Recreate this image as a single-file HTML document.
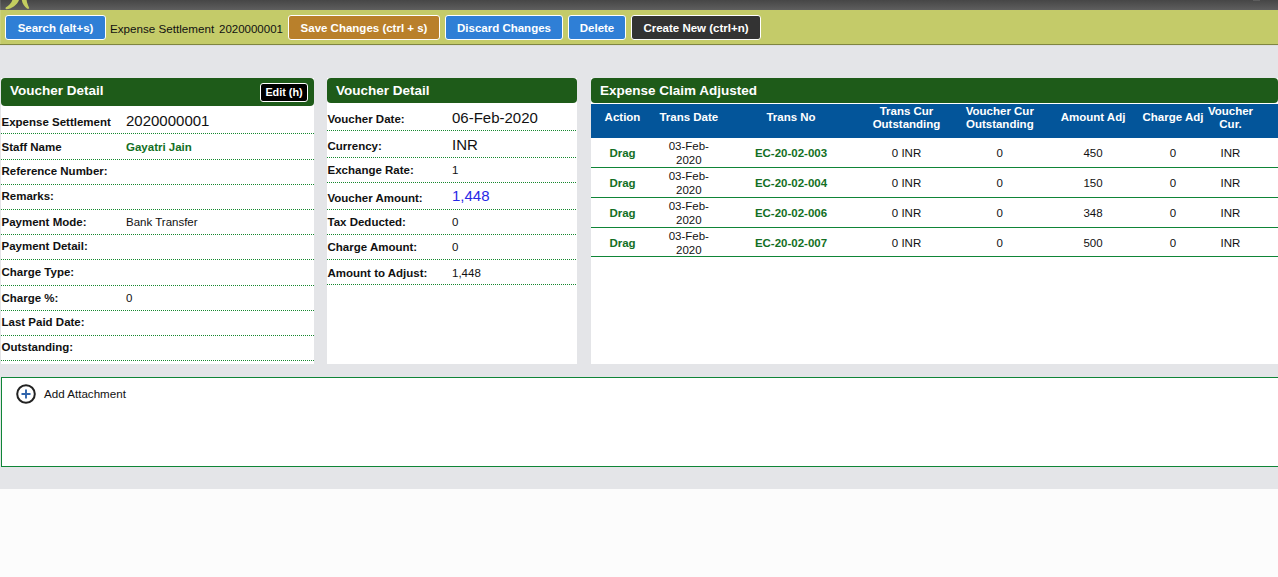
<!DOCTYPE html>
<html><head><meta charset="utf-8">
<style>
*{box-sizing:border-box;margin:0;padding:0}
html,body{width:1278px;height:577px;overflow:hidden;background:#fcfcfc;font-family:"Liberation Sans",sans-serif;color:#111}
.a{position:absolute;white-space:nowrap}
#top{position:absolute;left:0;top:0;width:1278px;height:10px;background:linear-gradient(#464646,#5e5e5e)}
#bar{position:absolute;left:0;top:10px;width:1278px;height:35px;background:#c4cb69;border-bottom:1px solid #7f8540}
#gray{position:absolute;left:0;top:45px;width:1278px;height:444px;background:#e4e5e8;border-top:1px solid #dcdde0}
.btn{position:absolute;top:15px;height:25px;border:1px solid #fff;border-radius:3px;color:#fff;font-weight:bold;font-size:11.5px;line-height:24px;text-align:center;white-space:nowrap}
.blue{background:#2f7fd6}
.panel{position:absolute;top:78px;background:#fff}
.hdr{position:absolute;left:0;top:0;background:#1e5b19;border-radius:4px;color:#fff;font-weight:bold;font-size:13.5px}
.dl{position:absolute;left:0;height:1px;background-image:linear-gradient(to right,#15882e 50%,transparent 50%);background-size:2px 1px}
.lbl{position:absolute;left:1.5px;font-weight:bold;font-size:11.5px;white-space:nowrap}
.val{position:absolute;font-size:11.5px;white-space:nowrap}
.big{font-size:15px}
.th{position:absolute;color:#fff;font-weight:bold;font-size:11.5px;line-height:12.5px;text-align:center;width:120px;white-space:nowrap}
.td{position:absolute;font-size:11.5px;line-height:13px;text-align:center;width:120px;white-space:nowrap}
.g{color:#136f24;font-weight:bold}
.rl{position:absolute;left:591px;width:687px;height:1px;background:#0f8537}
</style></head><body>
<div id="top"></div>
<svg style="position:absolute;left:0;top:0" width="40" height="10">
<path d="M6.5 9.2 C11 9, 17.5 5, 19 0 L12.4 0 C11.5 3, 8.5 5.8, 6 7.2 C5.2 7.8, 5.4 9.2, 6.5 9.2 Z" fill="#c3ce5f"/>
<path d="M21.8 0 L26.6 0 C26.8 3, 28.6 6, 29.2 8.2 C29 8.9, 27.6 9, 27 8.5 C24.8 6.5, 22.2 4, 21.8 0 Z" fill="#c3ce5f"/>
</svg>
<div style="position:absolute;left:1253px;top:0;width:7px;height:1px;background:#5d5d5d"></div>
<div id="bar"></div>
<div id="gray"></div>
<div style="position:absolute;left:0;top:0;width:1px;height:44px;background:rgba(255,255,255,0.12)"></div>
<div class="btn blue" style="left:5px;width:101px">Search (alt+s)</div>
<div class="a" style="left:110px;top:16.4px;line-height:25px;font-size:11.65px">Expense Settlement</div>
<div class="a" style="left:219px;top:17px;line-height:25px;font-size:11.5px">2020000001</div>
<div class="btn" style="left:288px;width:152px;background:#b9802b">Save Changes (ctrl + s)</div>
<div class="btn blue" style="left:445px;width:118px">Discard Changes</div>
<div class="btn blue" style="left:568px;width:58px">Delete</div>
<div class="btn" style="left:631px;width:130px;background:#333">Create New (ctrl+n)</div>

<!-- panel 1 -->
<div class="panel" style="left:1px;width:313px;height:286px">
  <div class="hdr" style="width:313px;height:28px"><span class="a" style="left:9px;top:4.5px">Voucher Detail</span>
    <div style="position:absolute;left:259px;top:5px;width:48px;height:19px;background:#000;border:1px solid #fff;border-radius:3px;font-size:10.8px;line-height:17px;text-align:center">Edit (h)</div>
  </div>
</div>
<div class="dl" style="left:1px;top:133px;width:313px"></div>
<div class="dl" style="left:1px;top:159px;width:313px"></div>
<div class="dl" style="left:1px;top:184px;width:313px"></div>
<div class="dl" style="left:1px;top:209px;width:313px"></div>
<div class="dl" style="left:1px;top:234px;width:313px"></div>
<div class="dl" style="left:1px;top:259px;width:313px"></div>
<div class="dl" style="left:1px;top:285px;width:313px"></div>
<div class="dl" style="left:1px;top:310px;width:313px"></div>
<div class="dl" style="left:1px;top:335px;width:313px"></div>
<div class="dl" style="left:1px;top:360px;width:313px"></div>

<div class="lbl" style="top:116px">Expense Settlement</div>
<div class="val big" style="left:126px;top:112px">2020000001</div>
<div class="lbl" style="top:141px">Staff Name</div>
<div class="val g" style="left:126px;top:141px">Gayatri Jain</div>
<div class="lbl" style="top:165px">Reference Number:</div>
<div class="lbl" style="top:190px">Remarks:</div>
<div class="lbl" style="top:216px">Payment Mode:</div>
<div class="val" style="left:126px;top:216px">Bank Transfer</div>
<div class="lbl" style="top:240px">Payment Detail:</div>
<div class="lbl" style="top:266px">Charge Type:</div>
<div class="lbl" style="top:292px">Charge %:</div>
<div class="val" style="left:126px;top:292px">0</div>
<div class="lbl" style="top:316px">Last Paid Date:</div>
<div class="lbl" style="top:341px">Outstanding:</div>

<!-- panel 2 -->
<div class="panel" style="left:327px;width:250px;height:286px">
  <div class="hdr" style="width:250px;height:25px"><span class="a" style="left:9px;top:4.5px">Voucher Detail</span></div>
</div>
<div class="dl" style="left:327px;top:130px;width:250px"></div>
<div class="dl" style="left:327px;top:157px;width:250px"></div>
<div class="dl" style="left:327px;top:182px;width:250px"></div>
<div class="dl" style="left:327px;top:209px;width:250px"></div>
<div class="dl" style="left:327px;top:234px;width:250px"></div>
<div class="dl" style="left:327px;top:259px;width:250px"></div>
<div class="dl" style="left:327px;top:284px;width:250px"></div>

<div class="lbl" style="left:327.5px;top:113px">Voucher Date:</div>
<div class="val big" style="left:452px;top:109px">06-Feb-2020</div>
<div class="lbl" style="left:327.5px;top:140px">Currency:</div>
<div class="val big" style="left:452px;top:136px">INR</div>
<div class="lbl" style="left:327.5px;top:164px">Exchange Rate:</div>
<div class="val" style="left:452px;top:164px">1</div>
<div class="lbl" style="left:327.5px;top:192px">Voucher Amount:</div>
<div class="val big" style="left:452px;top:187px;color:#2828e6">1,448</div>
<div class="lbl" style="left:327.5px;top:216px">Tax Deducted:</div>
<div class="val" style="left:452px;top:216px">0</div>
<div class="lbl" style="left:327.5px;top:241px">Charge Amount:</div>
<div class="val" style="left:452px;top:241px">0</div>
<div class="lbl" style="left:327.5px;top:267px">Amount to Adjust:</div>
<div class="val" style="left:452px;top:267px">1,448</div>

<!-- panel 3 -->
<div class="panel" style="left:591px;width:687px;height:286px">
  <div class="hdr" style="width:687px;height:25px"><span class="a" style="left:9px;top:4.5px">Expense Claim Adjusted</span></div>
</div>
<div style="position:absolute;left:591px;top:104px;width:687px;height:34px;background:#03559a"></div>
<div class="th" style="left:562.5px;top:111px">Action</div>
<div class="th" style="left:628.8px;top:111px">Trans Date</div>
<div class="th" style="left:731px;top:111px">Trans No</div>
<div class="th" style="left:846.5px;top:105px">Trans Cur<br>Outstanding</div>
<div class="th" style="left:939.8px;top:105px">Voucher Cur<br>Outstanding</div>
<div class="th" style="left:1033px;top:111px">Amount Adj</div>
<div class="th" style="left:1113px;top:111px">Charge Adj</div>
<div class="th" style="left:1170.5px;top:105px">Voucher<br>Cur.</div>

<div class="td g" style="left:562.5px;top:147px">Drag</div>
<div class="td" style="left:628.8px;top:139px;line-height:14px">03-Feb-<br>2020</div>
<div class="td g" style="left:731px;top:147px">EC-20-02-003</div>
<div class="td" style="left:846.5px;top:147px">0 INR</div>
<div class="td" style="left:939.8px;top:147px">0</div>
<div class="td" style="left:1033px;top:147px">450</div>
<div class="td" style="left:1113px;top:147px">0</div>
<div class="td" style="left:1170.5px;top:147px">INR</div>
<div class="td g" style="left:562.5px;top:177px">Drag</div>
<div class="td" style="left:628.8px;top:169px;line-height:14px">03-Feb-<br>2020</div>
<div class="td g" style="left:731px;top:177px">EC-20-02-004</div>
<div class="td" style="left:846.5px;top:177px">0 INR</div>
<div class="td" style="left:939.8px;top:177px">0</div>
<div class="td" style="left:1033px;top:177px">150</div>
<div class="td" style="left:1113px;top:177px">0</div>
<div class="td" style="left:1170.5px;top:177px">INR</div>
<div class="td g" style="left:562.5px;top:207px">Drag</div>
<div class="td" style="left:628.8px;top:199px;line-height:14px">03-Feb-<br>2020</div>
<div class="td g" style="left:731px;top:207px">EC-20-02-006</div>
<div class="td" style="left:846.5px;top:207px">0 INR</div>
<div class="td" style="left:939.8px;top:207px">0</div>
<div class="td" style="left:1033px;top:207px">348</div>
<div class="td" style="left:1113px;top:207px">0</div>
<div class="td" style="left:1170.5px;top:207px">INR</div>
<div class="td g" style="left:562.5px;top:237px">Drag</div>
<div class="td" style="left:628.8px;top:229px;line-height:14px">03-Feb-<br>2020</div>
<div class="td g" style="left:731px;top:237px">EC-20-02-007</div>
<div class="td" style="left:846.5px;top:237px">0 INR</div>
<div class="td" style="left:939.8px;top:237px">0</div>
<div class="td" style="left:1033px;top:237px">500</div>
<div class="td" style="left:1113px;top:237px">0</div>
<div class="td" style="left:1170.5px;top:237px">INR</div>
<div class="rl" style="top:167px"></div>
<div class="rl" style="top:197px"></div>
<div class="rl" style="top:227px"></div>
<div class="rl" style="top:256px"></div>

<!-- attachment -->
<div style="position:absolute;left:1px;top:377px;width:1290px;height:90px;background:#fff;border:1px solid #0f8537"></div>
<svg style="position:absolute;left:15px;top:383px" width="22" height="22">
<circle cx="11" cy="11" r="8.8" fill="none" stroke="#222" stroke-width="2"/>
<path d="M6.5 11 H15.5 M11 6.5 V15.5" stroke="#2f64ac" stroke-width="1.9"/>
</svg>
<div class="a" style="left:44px;top:387px;font-size:11.6px">Add Attachment</div>
</body></html>
